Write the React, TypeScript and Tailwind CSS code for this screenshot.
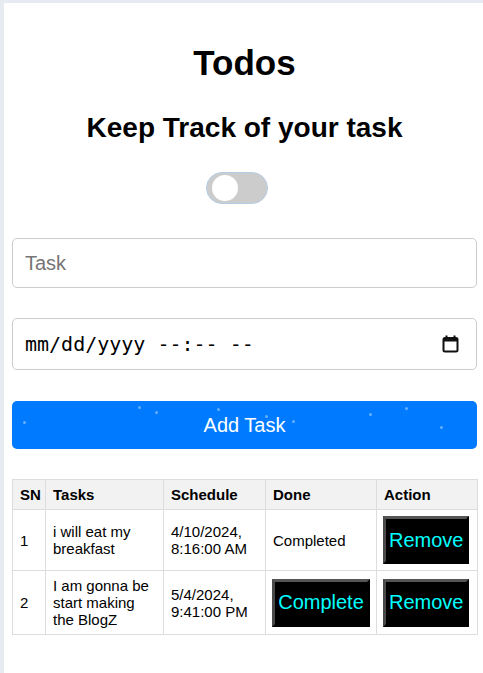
import React from "react";

const dots: [number, number][] = [
  [126, 5],
  [143, 10],
  [205, 7],
  [253, 14],
  [11, 20],
  [280, 19],
  [357, 12],
  [393, 6],
  [428, 25],
];

function RetroButton({ label, width }: { label: string; width: string }) {
  return (
    <button
      className={`${width} h-[48px] bg-black text-[#00ffff] text-[20px] leading-[23px] px-[3px] border-[3px] border-solid border-t-[#555555] border-l-[#4a4a4a] border-r-black border-b-black`}
      style={{ fontFamily: '"Liberation Sans", Arial, sans-serif' }}
    >
      {label}
    </button>
  );
}

function CalendarIcon() {
  return (
    <svg width="17" height="18" viewBox="0 0 17 18" className="block">
      <rect x="1.5" y="3" width="14" height="13.5" rx="1.5" fill="none" stroke="#111" strokeWidth="2" />
      <rect x="1.5" y="3" width="14" height="3.5" fill="#111" />
      <rect x="3.5" y="0.5" width="2" height="3" fill="#111" />
      <rect x="11.5" y="0.5" width="2" height="3" fill="#111" />
    </svg>
  );
}

export default function App() {
  const font = { fontFamily: '"Liberation Sans", Arial, sans-serif' };
  const cell = "border border-[#dddddd] px-[7px] py-[6px] align-middle";
  const btnCell = "border border-[#dddddd] pl-[6px] pr-1 py-[6px] align-middle";
  return (
    <div
      className="w-screen min-h-screen overflow-hidden bg-[#e6ebf1] pt-[3px] pl-[4px]"
      style={font}
    >
      <div className="w-[481px] min-h-[670px] bg-white px-2 pt-[40px] pb-10 text-black">
        <h1 className="text-center font-bold text-[35px] leading-[39px]">Todos</h1>
        <h2 className="mt-[30px] text-center font-bold text-[28px] leading-[32px]">
          Keep Track of your task
        </h2>
        <div className="mt-[28px] flex justify-start pl-[194px]">
          <div className="relative w-[62px] h-[32px] rounded-full bg-[#cccccc] border border-[#b4cde6]">
            <span className="absolute left-[5px] top-[2px] w-[26px] h-[26px] rounded-full bg-white" />
          </div>
        </div>
        <input
          type="text"
          placeholder="Task"
          className="mt-[34px] block w-full h-[50px] rounded-[5px] border border-[#cccccc] px-3 text-[20px] placeholder:text-[#757575] outline-none"
          style={font}
        />
        <div className="mt-[30px] flex h-[52px] w-full items-center justify-between rounded-[5px] border border-[#cccccc] pl-3 pr-[17px]">
          <span
            className="text-[20px] leading-[24px] text-black whitespace-pre"
            style={{ fontFamily: '"DejaVu Sans Mono", monospace' }}
          >
            mm/dd/yyyy --:-- --
          </span>
          <CalendarIcon />
        </div>
        <button
          className="relative mt-[31px] block w-full h-[48px] rounded-[5px] bg-[#007bff] text-white text-[20px]"
          style={font}
        >
          Add Task
          {dots.map(([x, y], i) => (
            <span
              key={i}
              className="absolute w-[3px] h-[3px] rounded-full bg-white/40"
              style={{ left: x, top: y }}
            />
          ))}
        </button>
        <table className="mt-[30px] w-full table-fixed border-collapse text-[15px] leading-[17px]">
          <colgroup>
            <col className="w-[33px]" />
            <col className="w-[118px]" />
            <col className="w-[102px]" />
            <col className="w-[111px]" />
            <col className="w-[101px]" />
          </colgroup>
          <thead>
            <tr className="bg-[#f2f2f2]">
              {["SN", "Tasks", "Schedule", "Done", "Action"].map((h) => (
                <th key={h} className="border border-[#dddddd] px-[7px] py-[6px] text-left font-bold">
                  {h}
                </th>
              ))}
            </tr>
          </thead>
          <tbody>
            <tr>
              <td className={cell}>1</td>
              <td className={cell}>i will eat my breakfast</td>
              <td className={cell}>4/10/2024, 8:16:00 AM</td>
              <td className={cell}>Completed</td>
              <td className={btnCell}>
                <RetroButton label="Remove" width="w-[86px]" />
              </td>
            </tr>
            <tr>
              <td className={cell}>2</td>
              <td className={cell}>I am gonna be start making the BlogZ</td>
              <td className={cell}>5/4/2024, 9:41:00 PM</td>
              <td className={btnCell}>
                <RetroButton label="Complete" width="w-[98px]" />
              </td>
              <td className={btnCell}>
                <RetroButton label="Remove" width="w-[86px]" />
              </td>
            </tr>
          </tbody>
        </table>
      </div>
    </div>
  );
}
